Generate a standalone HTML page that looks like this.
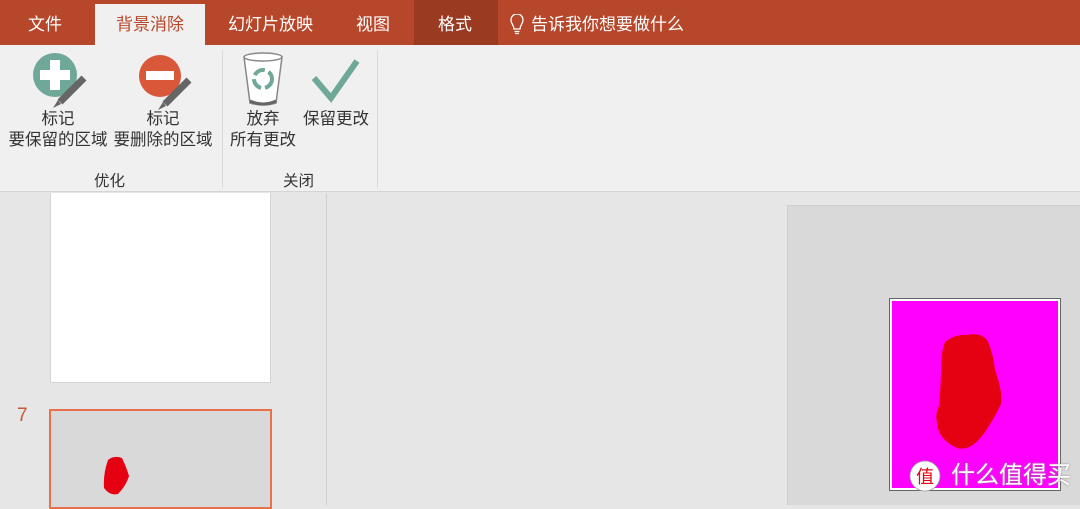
<!DOCTYPE html>
<html><head><meta charset="utf-8"><style>
*{margin:0;padding:0;box-sizing:border-box}
body{width:1080px;height:505px;overflow:hidden;background:#e6e6e6;font-family:"Liberation Sans","Noto Sans CJK SC",sans-serif;position:relative}
.a{position:absolute}
.tab{position:absolute;top:0;height:45px;line-height:50px;color:#fff;font-size:17px}
.lbl{position:absolute;font-size:16.5px;color:#333;text-align:center;line-height:21px;white-space:nowrap}
</style></head><body>
<div class="a" style="left:0;top:0;width:1080px;height:45px;background:#b7472a"></div>
<div class="a" style="left:95px;top:4px;width:110px;height:42px;background:#f0f0f0"></div>
<div class="a" style="left:414px;top:0;width:84px;height:45px;background:#993a21"></div>
<div class="tab" style="left:28px">文件</div>
<div class="tab" style="left:116px;color:#b7472a">背景消除</div>
<div class="tab" style="left:228px">幻灯片放映</div>
<div class="tab" style="left:356px">视图</div>
<div class="tab" style="left:438px">格式</div>
<svg class="a" style="left:510px;top:14px" width="14" height="22" viewBox="0 0 14 22"><path d="M4 15 C4 11 1 10 1 6 A6 6 0 0 1 13 6 C13 10 10 11 10 15 Z" fill="none" stroke="#fff" stroke-width="1.3"/><path d="M4.5 17.5h5M5 19.5h4" stroke="#fff" stroke-width="1.3"/></svg>
<div class="tab" style="left:531px">告诉我你想要做什么</div>
<div class="a" style="left:0;top:45px;width:1080px;height:147px;background:#f0f0f0;border-bottom:1px solid #d5d5d5"></div>
<div class="a" style="left:222px;top:50px;width:1px;height:138px;background:#dadada"></div>
<div class="a" style="left:377px;top:50px;width:1px;height:138px;background:#dadada"></div>
<svg class="a" style="left:0;top:45px" width="380" height="70">
<circle cx="55" cy="30" r="22" fill="#6fa898"/><rect x="40" y="25" width="30" height="10" fill="#fff"/><rect x="50" y="15" width="10" height="30" fill="#fff"/>
<path d="M84 33 L60 57" stroke="#666" stroke-width="7"/><path d="M58 55 L53 63 L61 59Z" fill="#666"/>
<circle cx="160" cy="31" r="21" fill="#d9583a"/><rect x="146" y="26" width="28" height="9" fill="#fff"/>
<path d="M189 35 L165 59" stroke="#666" stroke-width="7"/><path d="M163 57 L158 65 L166 61Z" fill="#666"/>
<path d="M244 12 L250 58 Q263 62 276 58 L282 12Z" fill="#fff" stroke="#888" stroke-width="1.5"/><ellipse cx="263" cy="12" rx="19" ry="4" fill="#fff" stroke="#888" stroke-width="1.5"/><path d="M250 56 Q263 62 276 56" stroke="#666" stroke-width="3" fill="none"/>
<circle cx="263" cy="34" r="9" fill="none" stroke="#6fa898" stroke-width="4" stroke-dasharray="12 4"/>
<path d="M314 33 L331 53 L357 16" stroke="#6fa898" stroke-width="6" fill="none"/>
</svg>
<div class="lbl" style="left:7px;top:109px;width:102px">标记<br>要保留的区域</div>
<div class="lbl" style="left:112px;top:109px;width:102px">标记<br>要删除的区域</div>
<div class="lbl" style="left:227px;top:109px;width:72px">放弃<br>所有更改</div>
<div class="lbl" style="left:301px;top:109px;width:70px">保留更改</div>
<div class="lbl" style="left:94px;top:171px;font-size:15.5px">优化</div>
<div class="lbl" style="left:283px;top:171px;font-size:15.5px">关闭</div>
<div class="a" style="left:326px;top:193px;width:1px;height:312px;background:#d0d0d0"></div>
<div class="a" style="left:50px;top:193px;width:221px;height:190px;background:#fff;border:1px solid #d4d4d4;border-top:none"></div>
<div class="a" style="left:17px;top:405px;color:#c75b39;font-size:19px">7</div>
<div class="a" style="left:49px;top:409px;width:223px;height:100px;background:#d9d9d9;border:2px solid #e8704d"></div>
<svg class="a" style="left:100px;top:454px" width="32" height="44"><path d="M8 6 Q14 1 22 4 Q26 12 29 22 Q26 32 18 40 Q10 42 4 34 Q3 20 8 6Z" fill="#e50012"/></svg>
<div class="a" style="left:787px;top:205px;width:293px;height:300px;background:#d9d9d9;border-left:1px solid #cfcfcf;border-top:1px solid #cfcfcf"></div>
<div class="a" style="left:889px;top:298px;width:172px;height:193px;border:1px solid #666;background:#fff"></div>
<div class="a" style="left:892px;top:301px;width:166px;height:187px;background:#ff00ff"></div>
<svg class="a" style="left:935px;top:332px" width="85" height="122" viewBox="0 0 85 122"><path d="M10 10 Q20 2 32 3 Q45 0 52 8 Q58 20 60 38 Q68 60 66 72 Q60 85 50 100 Q36 120 22 116 Q4 108 2 92 Q0 80 4 74 Q6 50 6 36 Q6 20 10 10Z" fill="#e50012"/></svg>
<svg class="a" style="left:909px;top:460px" width="32" height="32"><circle cx="16" cy="16" r="15" fill="#fff" stroke="#999" stroke-width="0.8"/><text x="16" y="23" font-size="18" text-anchor="middle" fill="#e50012" font-family="Noto Sans CJK SC">值</text></svg>
<div class="a" style="left:951px;top:461px;color:#fff;font-size:24px;line-height:30px;text-shadow:0 0 2px #888">什么值得买</div>
</body></html>
